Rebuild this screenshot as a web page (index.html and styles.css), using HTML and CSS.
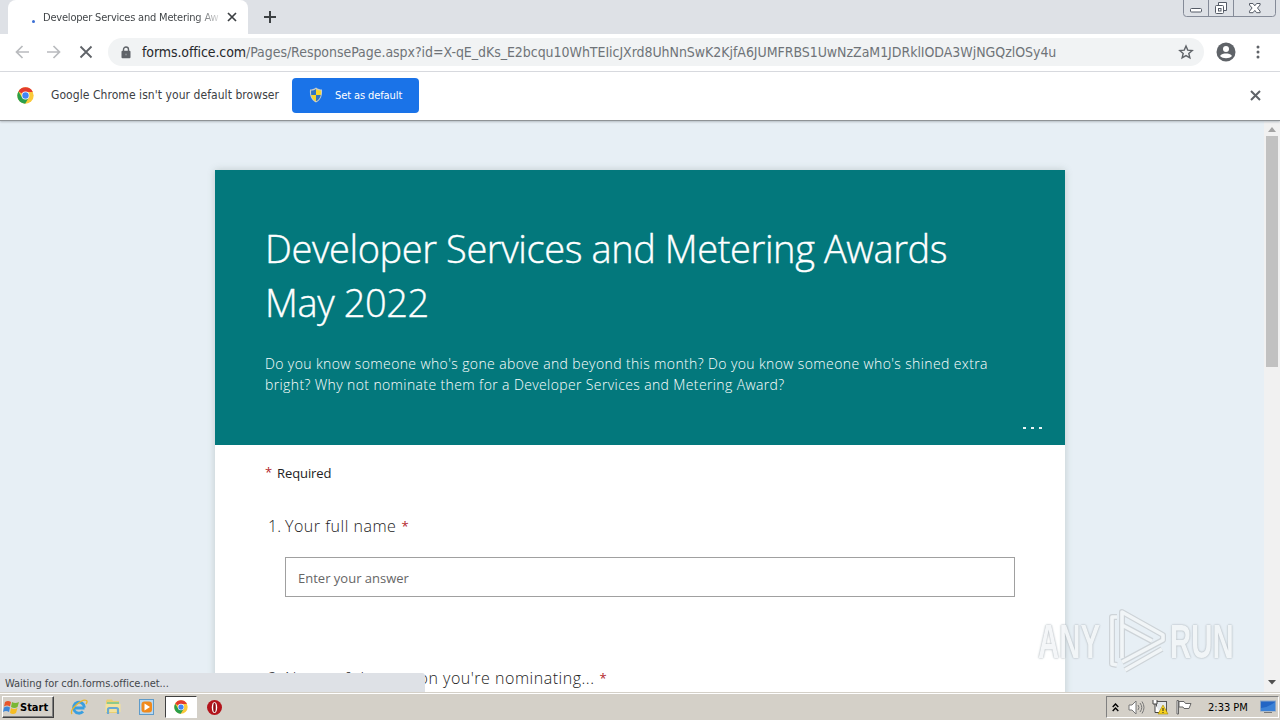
FILE: index.html
```html
<!DOCTYPE html>
<html lang="en">
<head>
<meta charset="utf-8">
<title>Developer Services and Metering Awards May 2022</title>
<link rel="stylesheet" href="styles.css">
</head>
<body>
<svg class="defs" width="0" height="0">
  <symbol id="chrome" viewBox="0 0 48 48">
    <circle cx="24" cy="24" r="23" fill="#fbc93a"/>
    <path d="M24 24 L4 12.5 A23 23 0 0 1 44 12.5 L44 14 H24Z" fill="#e33b2e"/>
    <path d="M4 12.5 A23 23 0 0 0 23 47 L34 29 L24 24 L14 29Z" fill="#2a9f4b"/>
    <circle cx="24" cy="24" r="11" fill="#fff"/>
    <circle cx="24" cy="24" r="9" fill="#4285f4"/>
  </symbol>
</svg>
<div class="screen">
  <header class="tabstrip">
    <div class="tab">
      <i class="spinner"></i>
      <span class="tab-title">Developer Services and Metering Aw</span>
      <svg class="tab-close" width="10" height="10" viewBox="0 0 10 10"><path d="M1 1l8 8M9 1l-8 8" stroke="#3c4043" stroke-width="1.7"/></svg>
    </div>
    <svg class="new-tab" width="12" height="12" viewBox="0 0 12 12"><path d="M6 0v12M0 6h12" stroke="#3c4043" stroke-width="2"/></svg>
    <svg class="window-buttons" width="94" height="18" viewBox="0 0 94 18" fill="none">
      <path d="M.5 0v13.500q0 3 3 3h86q3 0 3-3V0M25.500 0v16M50.500 0v16" stroke="#858b98"/>
      <rect x="7.500" y="8.500" width="11" height="3.500" rx="1" fill="#fff" stroke="#555b66"/>
      <path d="M35.500 5V2.500h8v8H41" stroke="#555b66" fill="#fff"/><rect x="32.500" y="5.500" width="8" height="8" rx="1" fill="#fff" stroke="#555b66"/><rect x="35.500" y="8.500" width="2.500" height="2.500" stroke="#555b66"/>
      <path d="M66.500 3.500h3.500l1.800 2.300 1.800-2.300h3.500v1.500L74.500 8l2.600 3.200v1.500h-3.500l-1.800-2.300-1.800 2.300h-3.500v-1.500L69.100 8 66.500 5z" fill="#fff" stroke="#555b66"/>
    </svg>
  </header>
  <nav class="toolbar">
    <svg class="nav-icon" width="14" height="14" viewBox="0 0 14 14" fill="none" stroke="#b9bbbe" stroke-width="1.700"><path d="M14 7H1.500M7.500 1l-6 6 6 6"/></svg>
    <svg class="nav-icon" width="14" height="14" viewBox="0 0 14 14" fill="none" stroke="#b9bbbe" stroke-width="1.700"><path d="M0 7h12.500M6.500 1l6 6-6 6"/></svg>
    <svg class="nav-icon" width="14" height="14" viewBox="0 0 14 14" stroke="#5f6368" stroke-width="1.800"><path d="M1.500 1.500l11 11M12.500 1.500l-11 11"/></svg>
    <div class="omnibox">
      <svg class="lock" width="10" height="13" viewBox="0 0 10 13"><path d="M2.500 5V3.500a2.500 2.500 0 0 1 5 0V5" fill="none" stroke="#5f6368" stroke-width="1.400"/><rect x=".5" y="4.700" width="9" height="7.600" rx="1" fill="#5f6368"/><circle cx="5" cy="8.500" r="1" fill="#888c90"/></svg>
      <div class="url"><span class="host">forms.office.com</span><span class="path">/Pages/ResponsePage.aspx?id=X-qE_dKs_E2bcqu10WhTEIicJXrd8UhNnSwK2KjfA6JUMFRBS1UwNzZaM1JDRklIODA3WjNGQzlOSy4u</span></div>
      <svg class="star" width="16" height="16" viewBox="0 0 24 24"><path d="M12 3l2.600 6.200 6.700.6-5.100 4.400 1.600 6.600-5.800-3.500-5.800 3.500 1.600-6.600-5.100-4.400 6.700-.6z" fill="none" stroke="#5f6368" stroke-width="2.100"/></svg>
    </div>
    <svg class="avatar" width="20" height="20" viewBox="0 0 20 20"><circle cx="10" cy="10" r="9.500" fill="#5f6368"/><circle cx="10" cy="7" r="3" fill="#fff"/><path d="M4 14c1-2 4-2.500 6-2.500s5 .5 6 2.500c-1.500 1.600-3.500 2.200-6 2.200s-4.500-.6-6-2.200z" fill="#fff"/></svg>
    <svg class="kebab" width="4" height="14" viewBox="0 0 4 14" fill="#5f6368"><circle cx="2" cy="2" r="1.500"/><circle cx="2" cy="7" r="1.500"/><circle cx="2" cy="12" r="1.500"/></svg>
  </nav>
  <div class="infobar">
    <svg width="17" height="17"><use href="#chrome"/></svg>
    <span class="info-text">Google Chrome isn't your default browser</span>
    <button class="default-button">
      <svg width="14" height="16" viewBox="0 0 14 16"><path d="M7 .5C5 2 3 2.500 1 2.500c-.5 6 1 10.500 6 13 5-2.500 6.500-7 6-13-2 0-4-.5-6-2z" fill="#c9cdc9"/><path d="M7 2v6H2.200C2 6.500 2 5 2.100 3.600 4 3.500 5.500 3 7 2zM7 8h4.800c-.6 3-2.200 5-4.800 6.300z" fill="#2f74c4"/><path d="M7 2v6h4.800c.2-1.500.2-3 .1-4.400C10 3.500 8.500 3 7 2zM7 8H2.200C2.800 11 4.400 13 7 14.300z" fill="#f6d52c"/></svg>
      <span>Set as default</span>
    </button>
    <svg class="info-close" width="11" height="11" viewBox="0 0 11 11"><path d="M1 1l9 9M10 1l-9 9" stroke="#5f6368" stroke-width="2"/></svg>
  </div>
  <main class="page">
    <article class="form">
      <section class="hero">
        <h1>Developer Services and Metering Awards<br>May 2022</h1>
        <p class="desc"><span class="d1">Do you know someone who's gone above and beyond this month? Do you know someone who's shined extra</span><br><span class="d2">bright? Why not nominate them for a Developer Services and Metering Award?</span></p>
        <div class="more"><i></i><i></i><i></i></div>
      </section>
      <section class="questions">
        <p class="required"><b>*</b><span>Required</span></p>
        <p class="question q1"><span class="num">1.</span><span class="label">Your full name</span><b>*</b></p>
        <div class="answer"><span>Enter your answer</span></div>
        <p class="question q2"><span class="num">2.</span><span class="label">Name of the person you're nominating...</span><b>*</b></p>
      </section>
    </article>
    <aside class="scrollbar">
      <svg width="8" height="5" viewBox="0 0 8 5"><path d="M0 5l4-5 4 5z" fill="#a3a3a3"/></svg>
      <div class="thumb"></div>
      <svg class="down" width="8" height="5" viewBox="0 0 8 5"><path d="M0 0l4 4.500L8 0z" fill="#505050"/></svg>
    </aside>
    <div class="status"><span>Waiting for cdn.forms.office.net...</span></div>
    <div class="watermark">
      <span class="wm-any">ANY</span>
      <svg width="60" height="66" viewBox="0 0 60 66" fill="none" stroke-linejoin="round">
        <g id="mark"><path d="M9 9H4v47l5 1M14 50V4l41 23v5L14 54M14 17l30 16M17 62l37-21" stroke="#cbd1d5" stroke-width="6"/></g>
        <path d="M9 9H4v47l5 1M14 50V4l41 23v5L14 54M14 17l30 16M17 62l37-21" stroke="#f3f6f8" stroke-width="3.600"/>
      </svg>
      <span class="wm-run">RUN</span>
    </div>
  </main>
  <footer class="taskbar">
    <div class="start">
      <svg width="17" height="16" viewBox="0 0 17 16"><path d="M2 3q3-2 6 0L7 7.500q-3-2-6 0z" fill="#e8562a"/><path d="M9 3q3 2 7 0l-1.500 5q-3 2-6.500 0z" fill="#79b733"/><path d="M1 8.500q3-2 6 0L6 13q-3-2-6 0z" fill="#3d87d8"/><path d="M8 9q3 2 6.500 0L13 14q-3 2-6 0z" fill="#f6bd23"/></svg>
      <span>Start</span>
    </div>
    <div class="launch">
      <svg width="18" height="18" viewBox="0 0 18 18" fill="none"><path d="M14.500 10H5M14.500 9.500a5.500 5.500 0 1 0-1.500 4" stroke="#3a9fe0" stroke-width="2.800"/><path d="M2 16C-1 12 12 0 16.500 2.500c1 1 .3 2.500-.5 3.500" stroke="#e8b52d" stroke-width="1.300"/></svg>
    </div>
    <div class="launch">
      <svg width="18" height="18" viewBox="0 0 18 18"><path d="M2 3l1-1.500h5L9 3h6v12H2z" fill="#e9cf72"/><path d="M3 4h12v2H3z" fill="#8fc98a"/><path d="M1.500 6h15v8h-15z" fill="#f3e29d"/><path d="M4 16V11.500q0-1.500 1.500-1.500h7q1.500 0 1.500 1.500V16" stroke="#69a9d3" stroke-width="2.200" fill="none"/></svg>
    </div>
    <div class="launch">
      <svg width="18" height="18" viewBox="0 0 18 18"><rect x="1.500" y="1.500" width="14" height="15" fill="#b9d8f0" stroke="#5f9bc9"/><rect x="3.500" y="3.500" width="10.500" height="11" rx="3" fill="#f08a1d"/><path d="M6.500 5.500l5.500 3.500-5.500 3.500z" fill="#fff"/></svg>
    </div>
    <div class="launch active"><svg width="14" height="14"><use href="#chrome"/></svg></div>
    <div class="launch">
      <svg width="17" height="17" viewBox="0 0 17 17"><circle cx="8.500" cy="8.500" r="7.500" fill="#b3141b"/><ellipse cx="8.500" cy="8.500" rx="2.700" ry="5.500" fill="#fff"/><ellipse cx="8.500" cy="8.500" rx="1.300" ry="4.700" fill="#8e0e14"/></svg>
    </div>
    <div class="tray">
      <svg class="t1" width="7" height="9" viewBox="0 0 7 9" fill="none" stroke="#000" stroke-width="1.400"><path d="M.7 4l2.800-3 2.800 3M.7 8l2.800-3 2.800 3"/></svg>
      <svg class="t2" width="17" height="15" viewBox="0 0 17 15" fill="none" stroke="#777"><path d="M1 5h3l4-4v13l-4-4H1z" fill="#fff"/><path d="M10 5q2 2.500 0 5M12 3q3.500 4.500 0 9M14 1.500q4 6 0 12"/></svg>
      <svg class="t3" width="17" height="16" viewBox="0 0 17 16"><rect x="4.500" y="2.500" width="10" height="10" fill="#e4e8eb" stroke="#555"/><path d="M1 1v4h4V1M3 5v8.500H8" fill="#fff" stroke="#444"/><path d="M11 6l5 9H6z" fill="#f7d21e" stroke="#a68a00" stroke-width=".6"/><path d="M11 9v3M11 13v1" stroke="#222"/></svg>
      <svg class="t4" width="16" height="16" viewBox="0 0 16 16" fill="#fff" stroke="#666"><path d="M1 1.500h1.500V15H1zM3 2.500h5l1.500 2H15l-2 5H8l-1-1.500H3z"/></svg>
      <span class="clock">2:33 PM</span>
      <svg class="t5" width="16" height="14" viewBox="0 0 16 14"><rect x=".5" y="1" width="15" height="10" fill="#2265c4" stroke="#8aa5c6"/><path d="M1 8Q9 7 15 2v9H1z" fill="#3c82d6"/><path d="M4 12.500h8" stroke="#777"/></svg>
    </div>
  </footer>
</div>
</body>
</html>
```
FILE: styles.css
```css
* { box-sizing: border-box; }
body { margin: 0; overflow: hidden; }
p, h1 { margin: 0; font-weight: 400; }
svg { display: block; flex: none; }
span { white-space: nowrap; }
.defs { position: absolute; }
.screen { width: 1280px; height: 720px; display: flex; flex-direction: column; background: #fff; font-family: "DejaVu Sans Condensed", "DejaVu Sans", sans-serif; font-stretch: condensed; overflow: hidden; }

.tabstrip { height: 34px; flex: none; background: #dee1e6; display: flex; padding-left: 8px; }
.tab { width: 240px; height: 34px; background: #fff; border-radius: 8px 8px 0 0; display: flex; align-items: center; padding: 0 11px 0 24px; }
.spinner { width: 3px; height: 3px; border-radius: 50%; background: #3b6fd4; margin: 8px 8px 0 0; }
.tab-title { width: 178px; font-size: 11px; letter-spacing: -0.2px; color: transparent; background: linear-gradient(90deg, #3c4043 86%, rgba(60, 64, 67, .1)); -webkit-background-clip: text; background-clip: text; }
.tab-close { margin-left: auto; }
.new-tab { margin: 11px 0 0 16px; }
.window-buttons { margin-left: auto; margin-right: 3px; }

.toolbar { height: 38px; flex: none; border-bottom: 1px solid #dadce0; display: flex; align-items: center; padding: 0 0 1px 15px; }
.nav-icon { margin-right: 18px; }
.omnibox { width: 1096px; height: 28px; margin-left: -3px; border-radius: 14px; background: #f1f3f4; display: flex; align-items: center; padding: 0 10px 0 13px; }
.url { margin-left: 11px; font-size: 14px; letter-spacing: -0.045px; color: #6f7378; }
.host { color: #26282b; letter-spacing: -0.1px; }
.star { margin-left: auto; }
.avatar { margin-left: 12px; }
.kebab { margin-left: 20px; }

.infobar { height: 49px; flex: none; display: flex; align-items: center; padding: 0 19px 2px 17px; border-bottom: 1px solid #8f9396; box-shadow: 0 1px 2px #b5bcc2; z-index: 1; }
.info-text { margin-left: 17px; width: 241px; font-size: 12px; letter-spacing: 0.06px; color: #3c4043; }
.default-button { width: 127px; height: 35px; border: 0; border-radius: 4px; background: #1a73e8; color: #fff; display: flex; align-items: center; padding: 0 0 0 17px; gap: 12px; font: inherit; font-size: 11px; letter-spacing: -0.1px; }
.info-close { margin-left: auto; }

.page { position: relative; flex: 1; min-height: 0; overflow: hidden; background: #e7eff5; display: flex; font-family: "Open Sans", "Noto Sans", sans-serif; font-stretch: normal; }
.form { width: 850px; height: 560px; margin: 49px 0 0 215px; background: #fff; box-shadow: 0 0 7px rgba(90, 110, 100, .28); }
.hero { height: 275px; background: #03787c; color: #fff; padding: 51px 23px 0 50px; }
.hero h1 { font-size: 38px; line-height: 54px; font-weight: 300; letter-spacing: -0.4px; -webkit-text-stroke: .4px #fff; }
.desc { margin-top: 24px; font-size: 14px; line-height: 21px; font-weight: 300; letter-spacing: 0.38px; color: #fff; }
.more { display: flex; justify-content: flex-end; gap: 5px; margin-top: 32px; }
.more i { width: 3px; height: 2px; background: #e9f5f5; }
.questions { padding: 0 50px; color: #222; }
.questions b { color: #b3262b; font-weight: 400; font-size: 13px; }
.required { display: flex; gap: 5px; padding-top: 18px; font-size: 13px; line-height: 20px; letter-spacing: -0.1px; }
.required b { position: relative; top: -1px; }
.question { display: flex; font-size: 16px; line-height: 24px; padding-left: 3px; font-weight: 300; }
.label { letter-spacing: 0.52px; }
.q1 { margin-top: 31px; }
.num { width: 17px; }
.question b { margin-left: 5px; }
.answer { margin: 19px 0 0 20px; height: 40px; border: 1px solid #a0a0a0; display: flex; align-items: center; padding: 1px 0 0 12px; font-size: 13px; color: #666; }
.q2 { margin-top: 69px; }

.scrollbar { margin-left: auto; width: 16px; background: #f1f1f1; display: flex; flex-direction: column; align-items: center; padding-top: 6px; }
.thumb { width: 12px; height: 231px; background: #c1c1c1; margin-top: 4px; }
.down { margin: auto 0 7px; }
.status { position: absolute; left: 0; bottom: 0; width: 425px; height: 19px; background: #dee1e6; border-radius: 0 3px 0 0; display: flex; align-items: center; padding: 1px 0 0 5px; font: 11px "DejaVu Sans Condensed", sans-serif; letter-spacing: -0.05px; color: #44474b; }
.watermark { position: absolute; left: 1038px; top: 487px; height: 66px; display: flex; align-items: center; opacity: .9; font: 700 49px "Liberation Sans Narrow", "Liberation Sans", sans-serif; color: #f3f6f8; text-shadow: 0 0 2px #a9b1b7, 0 0 3px #b9c0c5; }
.watermark span { width: 64px; transform-origin: left center; transform: scaleX(.6); }
.watermark svg { margin: 0 2px 0 6px; }

.taskbar { height: 28px; flex: none; background: #d4d0c8; border-top: 1px solid #d4d0c8; box-shadow: inset 0 1px #fff; display: flex; align-items: center; padding: 1px 1px 0 2px; }
.start { width: 52px; height: 22px; border: 1px solid; border-color: #fff #404040 #404040 #fff; box-shadow: inset -1px -1px #808080; display: flex; align-items: center; gap: 0; padding-left: 0; font-weight: 700; font-size: 11px; margin-right: 9px; }
.launch { width: 32px; height: 22px; margin-right: 2px; display: flex; align-items: center; justify-content: center; }
.launch.active { background: #fff; border: 1px solid; border-color: #404040 #fff #fff #404040; margin-right: 1px; }
.tray { margin-left: auto; width: 173px; height: 22px; border: 1px solid; border-color: #808080 #fff #fff #808080; display: flex; align-items: center; padding: 0 2px 0 5px; font-size: 11px; }
.t2 { margin-left: 9px; }
.t3 { margin-left: 7px; }
.t4 { margin-left: 7px; }
.clock { margin-left: 16px; }
.t5 { margin-left: auto; }
```
